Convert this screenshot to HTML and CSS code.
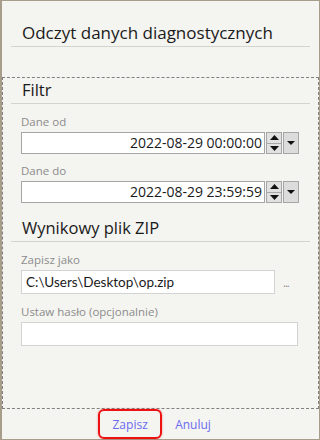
FILE: index.html
```html
<!DOCTYPE html>
<html lang="pl">
<head>
    <meta charset="UTF-8">
    <title>Odczyt danych diagnostycznych</title>
    <link rel="stylesheet" href="styles.css">
</head>
<body>
    <div class="dialog">
        <header class="dialog-header">
            <h1>Odczyt danych diagnostycznych</h1>
        </header>

        <div class="dialog-body">
            <!-- Filtr -->
            <h2 class="section-title">Filtr</h2>

            <label class="field-label">Dane od</label>
            <div class="date-row">
                <div class="date-input">2022-08-29 00:00:00</div>
                <div class="spin">
                    <span class="spin-btn"><svg width="9" height="5" viewBox="0 0 9 5"><path d="M0 5 L4.5 0 L9 5 Z" fill="#111"/></svg></span>
                    <span class="spin-btn"><svg width="9" height="5" viewBox="0 0 9 5"><path d="M0 0 L4.5 5 L9 0 Z" fill="#111"/></svg></span>
                </div>
                <div class="drop-btn"><svg width="8" height="4" viewBox="0 0 8 4"><path d="M0 0 L4 4 L8 0 Z" fill="#111"/></svg></div>
            </div>

            <label class="field-label">Dane do</label>
            <div class="date-row">
                <div class="date-input">2022-08-29 23:59:59</div>
                <div class="spin">
                    <span class="spin-btn"><svg width="9" height="5" viewBox="0 0 9 5"><path d="M0 5 L4.5 0 L9 5 Z" fill="#111"/></svg></span>
                    <span class="spin-btn"><svg width="9" height="5" viewBox="0 0 9 5"><path d="M0 0 L4.5 5 L9 0 Z" fill="#111"/></svg></span>
                </div>
                <div class="drop-btn"><svg width="8" height="4" viewBox="0 0 8 4"><path d="M0 0 L4 4 L8 0 Z" fill="#111"/></svg></div>
            </div>

            <!-- Wynikowy plik ZIP -->
            <h2 class="section-title section-zip">Wynikowy plik ZIP</h2>

            <label class="field-label">Zapisz jako</label>
            <div class="file-row">
                <div class="text-input path">C:\Users\Desktop\op.zip</div>
                <span class="browse">...</span>
            </div>

            <label class="field-label">Ustaw hasło (opcjonalnie)</label>
            <div class="text-input password"></div>
        </div>

        <footer class="dialog-footer">
            <button type="button" class="btn-link btn-save">Zapisz</button>
            <button type="button" class="btn-link">Anuluj</button>
        </footer>
    </div>
</body>
</html>
```

FILE: styles.css
```css
body {
    margin: 0;
    padding: 0;
    font-family: "Open Sans", "Noto Sans", sans-serif;
    color: #1a1a1a;
}

.dialog {
    width: 320px;
    height: 440px;
    box-sizing: border-box;
    background-color: #f4f4f0;
    border: 1px solid #a89c8a;
    border-left-width: 2px;
    display: flex;
    flex-direction: column;
}

.dialog-header {
    padding: 20px 9px 0 9px;
    height: 56px;
}

.dialog-header h1 {
    font-size: 17px;
    font-weight: normal;
    margin: 0;
    padding: 0 0 2px 11px;
    line-height: 23px;
    border-bottom: 1px solid #d3d3cf;
}

.dialog-body {
    flex: 1;
    border: 1px dashed #808080;
    padding: 1px 8px 0 8px;
    display: flex;
    flex-direction: column;
}

.section-title {
    font-size: 16.5px;
    font-weight: normal;
    margin: 0 0 10px 0;
    padding: 0 0 2px 11px;
    line-height: 22px;
    border-bottom: 1px solid #d3d3cf;
}

.section-zip {
    margin-top: 5px;
}

.field-label {
    display: block;
    font-size: 11.5px;
    color: #8c8c8c;
    margin-left: 10px;
    line-height: 16px;
    margin-bottom: 2px;
}

.date-row {
    display: flex;
    margin-left: 10px;
    margin-bottom: 9px;
    height: 22px;
}

.date-input {
    width: 244px;
    box-sizing: border-box;
    background: #ffffff;
    border: 1px solid #a6a6a6;
    font-size: 14px;
    text-align: right;
    line-height: 20px;
    padding-right: 2px;
}

.spin {
    width: 16px;
    display: flex;
    flex-direction: column;
    margin-left: 1px;
}

.spin-btn {
    flex: 1;
    background: #e1e1e1;
    border: 1px solid #a6a6a6;
    display: flex;
    align-items: center;
    justify-content: center;
}

.spin-btn + .spin-btn {
    border-top: none;
}

.drop-btn {
    width: 16px;
    box-sizing: border-box;
    background: #dcdcdc;
    border: 1px solid #a6a6a6;
    display: flex;
    align-items: center;
    justify-content: center;
    margin-left: 1px;
}

.file-row {
    display: flex;
    align-items: center;
    margin-left: 10px;
    margin-bottom: 10px;
}

.text-input {
    box-sizing: border-box;
    height: 24px;
    width: 254px;
    background: #ffffff;
    border: 1px solid #d3d3d3;
    font-size: 14px;
    line-height: 22px;
    padding-left: 4px;
}

.text-input.path {
    font-family: Lato, "Open Sans", sans-serif;
    font-size: 13.5px;
}

.text-input.password {
    width: 277px;
    margin-left: 10px;
}

.browse {
    font-size: 11px;
    color: #888;
    margin-left: 8px;
    letter-spacing: -1px;
}

.dialog-footer {
    height: 30px;
    display: flex;
    justify-content: center;
    align-items: center;
    padding-right: 12px;
}

.btn-link {
    font-family: "Open Sans", "Noto Sans", sans-serif;
    font-size: 12px;
    color: #6b6bf0;
    background: none;
    border: none;
    padding: 0;
    cursor: pointer;
}

.btn-save {
    width: 64px;
    height: 30px;
    border: 2px solid #ee1111;
    border-radius: 6px;
    margin-right: 13px;
    box-shadow: 0 0 2px rgba(238, 17, 17, 0.5);
}
```
